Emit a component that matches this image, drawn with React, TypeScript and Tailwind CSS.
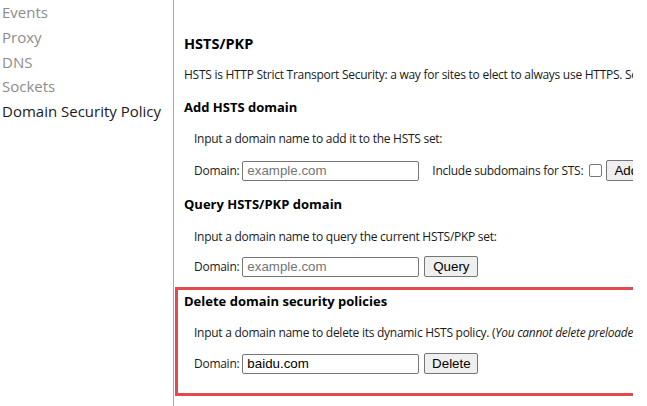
import type { ReactNode } from 'react';

const sans = '[font-family:"Open_Sans","Noto_Sans",sans-serif]';
const body = 'text-[12px] leading-[16px] tracking-[-0.27px] whitespace-nowrap';

const navItems = ['Events', 'Proxy', 'DNS', 'Sockets', 'Domain Security Policy'];

function DomainRow({ value, placeholder, children }: { value?: string; placeholder?: string; children?: ReactNode }) {
  return (
    <div className="flex items-center h-[21px] pl-[10px] whitespace-nowrap">
      <span className={body}>Domain:</span>
      <input
        readOnly
        value={value}
        placeholder={placeholder}
        className="ml-[3px] w-[177px] h-[20px] border border-[#767676] rounded-[2px] pl-[4px] text-[13.33px] text-black placeholder:text-[#757575] [font-family:'Liberation_Sans',Arial,sans-serif] outline-none bg-white"
      />
      {children}
    </div>
  );
}

function Btn({ label, className = '' }: { label: string; className?: string }) {
  return (
    <button className={`h-[21px] bg-[#efefef] border border-[#767676] rounded-[2px] text-[13.33px] text-black [font-family:'Liberation_Sans',Arial,sans-serif] text-center shrink-0 ${className}`}>
      {label}
    </button>
  );
}

export default function App() {
  return (
    <div className={`flex w-[647px] h-[406px] bg-white text-[#1a1a1a] ${sans} overflow-hidden`}>
      {/* Sidebar */}
      <aside className="w-[174px] h-full border-r border-[#a8a8a8] shrink-0">
        {navItems.map((item) => (
          <div
            key={item}
            className={`pl-[2px] text-[15px] leading-[24.75px] whitespace-nowrap ${item === 'Domain Security Policy' ? 'text-[#1a1a1a]' : 'text-[#8c8c8c]'}`}
          >
            {item}
          </div>
        ))}
      </aside>

      {/* Content */}
      <main className="w-[459px] shrink-0 overflow-hidden">
        <h2 className="mt-[34px] pl-[10px] text-[14.5px] leading-[20px] font-bold text-black whitespace-nowrap">HSTS/PKP</h2>
        <p className={`mt-[13px] pl-[10px] ${body}`}>
          HSTS is HTTP Strict Transport Security: a way for sites to elect to always use HTTPS. See https://www.chromium.org/hsts
        </p>

        <h3 className="mt-[15px] pl-[10px] text-[13px] leading-[18px] font-bold text-black whitespace-nowrap">Add HSTS domain</h3>
        <p className={`mt-[15px] pl-[20px] ${body}`}>Input a domain name to add it to the HSTS set:</p>
        <div className="mt-[13px] pl-[10px]">
          <DomainRow placeholder="example.com">
            <span className={`ml-[13px] ${body}`}>Include subdomains for STS:</span>
            <input type="checkbox" readOnly className="ml-[6px] appearance-none w-[13px] h-[13px] border border-[#767676] rounded-[2px] bg-white shrink-0" />
            <Btn label="Add" className="ml-[4px] w-[40px]" />
          </DomainRow>
        </div>

        <h3 className="mt-[14px] pl-[10px] text-[13px] leading-[18px] font-bold text-black whitespace-nowrap">Query HSTS/PKP domain</h3>
        <p className={`mt-[16px] pl-[20px] ${body}`}>Input a domain name to query the current HSTS/PKP set:</p>
        <div className="mt-[11px] pl-[10px]">
          <DomainRow placeholder="example.com">
            <Btn label="Query" className="ml-[5px] w-[54px]" />
          </DomainRow>
        </div>

        {/* Highlighted section */}
        <section className="mt-[10px] ml-[1px] w-[470px] border-[3px] border-[#e24a4d] pl-[6px] pt-[2px] pb-[19px]">
          <h3 className="text-[13px] leading-[18px] font-bold text-black whitespace-nowrap">Delete domain security policies</h3>
          <p className={`mt-[15px] pl-[10px] ${body}`}>
            Input a domain name to delete its dynamic HSTS policy. (<i>You cannot delete preloaded entries.</i>)
          </p>
          <div className="mt-[12px]">
            <div className="flex items-center h-[21px] pl-[10px] whitespace-nowrap">
              <span className={body}>Domain:</span>
              <input
                readOnly
                value="baidu.com"
                className="ml-[3px] w-[177px] h-[20px] border border-[#767676] rounded-[2px] pl-[4px] text-[13.33px] text-black [font-family:'Liberation_Sans',Arial,sans-serif] outline-none bg-white"
              />
              <Btn label="Delete" className="ml-[5px] w-[54px]" />
            </div>
          </div>
        </section>
      </main>
    </div>
  );
}
